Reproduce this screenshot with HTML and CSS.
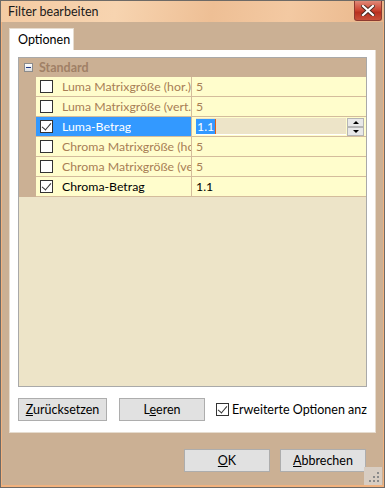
FILE: index.html
```html
<!DOCTYPE html>
<html lang="de">
<head>
    <meta charset="UTF-8">
    <title>Filter bearbeiten</title>
    <link rel="stylesheet" href="styles.css">
</head>
<body>

    <div class="window">
        <div class="titlebar">
            <span class="title">Filter bearbeiten</span>
            <div class="close-btn">
                <svg width="14" height="11" viewBox="0 0 14 11">
                    <path d="M2 1 L12 10 M12 1 L2 10" stroke="#4a2a20" stroke-width="4" stroke-linecap="square"/>
                    <path d="M2 1 L12 10 M12 1 L2 10" stroke="#fff" stroke-width="2.2" stroke-linecap="square"/>
                </svg>
            </div>
        </div>

        <div class="client">
            <div class="tabs">
                <div class="tab">Optionen</div>
            </div>

            <div class="tab-page">
                <div class="prop-grid">
                    <div class="category">
                        <span class="gutter"><span class="toggle"></span></span>
                        <span class="cat-name">Standard</span>
                    </div>

                    <div class="prop-row">
                        <span class="gutter"></span>
                        <span class="prop-name"><span class="check"></span><span class="name-text">Luma Matrixgröße (hor.)</span></span>
                        <span class="prop-value">5</span>
                    </div>
                    <div class="prop-row">
                        <span class="gutter"></span>
                        <span class="prop-name"><span class="check"></span><span class="name-text">Luma Matrixgröße (vert.)</span></span>
                        <span class="prop-value">5</span>
                    </div>
                    <div class="prop-row selected">
                        <span class="gutter"></span>
                        <span class="prop-name"><span class="check checked"></span><span class="name-text">Luma-Betrag</span></span>
                        <span class="prop-value">
                            <span class="editor"><span class="sel-text">1.1</span><span class="caret"></span></span>
                            <span class="spin">
                                <span class="spin-btn"><i class="arrow up"></i></span>
                                <span class="spin-btn"><i class="arrow down"></i></span>
                            </span>
                        </span>
                    </div>
                    <div class="prop-row">
                        <span class="gutter"></span>
                        <span class="prop-name"><span class="check"></span><span class="name-text">Chroma Matrixgröße (hor.)</span></span>
                        <span class="prop-value">5</span>
                    </div>
                    <div class="prop-row">
                        <span class="gutter"></span>
                        <span class="prop-name"><span class="check"></span><span class="name-text">Chroma Matrixgröße (vert.)</span></span>
                        <span class="prop-value">5</span>
                    </div>
                    <div class="prop-row active">
                        <span class="gutter"></span>
                        <span class="prop-name"><span class="check checked"></span><span class="name-text">Chroma-Betrag</span></span>
                        <span class="prop-value">1.1</span>
                    </div>
                </div>

                <div class="actions">
                    <button class="win-button"><u>Z</u>urücksetzen</button>
                    <button class="win-button">L<u>e</u>eren</button>
                    <label class="check-label"><span class="check checked"></span><span class="name-text">Erweiterte Optionen anzeigen</span></label>
                </div>
            </div>

            <div class="footer">
                <button class="win-button"><u>O</u>K</button>
                <button class="win-button"><u>A</u>bbrechen</button>
            </div>

            <div class="size-grip">
                <svg width="12" height="12" viewBox="0 0 12 12" fill="#8a8a8a">
                    <rect x="9" y="1" width="2" height="2"/>
                    <rect x="5" y="5" width="2" height="2"/>
                    <rect x="9" y="5" width="2" height="2"/>
                    <rect x="1" y="9" width="2" height="2"/>
                    <rect x="5" y="9" width="2" height="2"/>
                    <rect x="9" y="9" width="2" height="2"/>
                </svg>
            </div>
        </div>
    </div>

</body>
</html>
```

FILE: styles.css
```css
* {
    box-sizing: border-box;
}

body {
    margin: 0;
    background-color: #cbb094;
    font-family: Lato, "Noto Sans", sans-serif;
    font-size: 12.3px;
    color: #000;
}

.window {
    position: relative;
    width: 385px;
    height: 488px;
    display: flex;
    flex-direction: column;
    background-color: #cbb094;
    border: 1px solid #6e6a66;
    box-shadow: inset 1px 0 0 #f2b27e, inset -1px 0 0 #f2b27e, inset 0 -2px 0 #f2b27e;
    overflow: hidden;
}

.titlebar {
    height: 21px;
    display: flex;
    align-items: center;
    justify-content: space-between;
    padding-left: 7px;
    font-size: 12.5px;
    background: linear-gradient(100deg, #f4cba3 0%, #f7d4b0 30%, #eebf95 55%, #f3c9a2 75%, #e9b68a 100%);
}

.title {
    color: #1a1a1a;
    margin-top: -1px;
}

.close-btn {
    width: 28px;
    height: 20px;
    margin-right: 2px;
    margin-top: -1px;
    display: flex;
    align-items: center;
    justify-content: center;
    border: 1px solid #8e3b30;
    border-top: none;
    border-radius: 0 0 3px 3px;
    background: linear-gradient(#e08a78 0%, #cf4a36 45%, #b8301f 60%, #c9503a 100%);
}

.client {
    flex: 1;
    display: flex;
    flex-direction: column;
    padding: 6px 8px 0 8px;
}

.tabs {
    display: flex;
    height: 22px;
}

.tab {
    width: 65px;
    height: 22px;
    padding: 3px 0 0 8px;
    font-size: 12.5px;
    background-color: #fff;
    border: 1px solid #e6dccf;
    border-bottom: none;
}

.tab-page {
    height: 383px;
    width: 367px;
    background-color: #fff;
    border: 1px solid #e6dccf;
    border-top: none;
    padding: 7px 8px 0 8px;
    display: flex;
    flex-direction: column;
}

.prop-grid {
    height: 330px;
    border: 1px solid #a9a9a9;
    background-color: #ede4c8;
    display: flex;
    flex-direction: column;
}

.category {
    height: 19px;
    display: flex;
    align-items: center;
    background-color: #cbb094;
}

.category .gutter {
    width: 19px;
    padding-left: 5px;
}

.toggle {
    position: relative;
    display: block;
    width: 9px;
    height: 9px;
    border: 1px solid #8c8c8c;
    background: linear-gradient(#fff, #dcdcdc);
}

.toggle::after {
    content: "";
    position: absolute;
    left: 1px;
    top: 3px;
    width: 5px;
    height: 1px;
    background-color: #1f3a8a;
}

.cat-name {
    font-weight: bold;
    font-size: 12.5px;
    color: #a08066;
    padding-left: 1px;
}

.prop-row {
    height: 20px;
    display: flex;
    border-bottom: 1px solid #d4bc9c;
}

.prop-row .gutter {
    width: 17px;
    background-color: #cbb094;
    margin-bottom: -1px;
}

.prop-name {
    width: 156px;
    display: flex;
    align-items: center;
    padding-left: 4px;
    background-color: #fffdcc;
    color: #a87e55;
    border-right: 1px solid #d4bc9c;
}

.name-text {
    white-space: nowrap;
    overflow: hidden;
    min-width: 0;
}

.prop-name .check {
    margin-right: 9px;
}

.prop-value {
    flex: 1;
    display: flex;
    align-items: center;
    padding-left: 4px;
    background-color: #fffdcc;
    color: #a87e55;
}

.selected .prop-name {
    background-color: #3399ff;
    color: #fff;
}

.active .prop-name,
.active .prop-value {
    color: #000;
}

.selected .prop-value {
    padding: 1px 0 0 4px;
    align-items: flex-start;
}

.editor {
    width: 150px;
    height: 17px;
    display: flex;
    align-items: center;
    background-color: #ede4c8;
    border-bottom: 1px solid #fff;
}

.sel-text {
    background-color: #3399ff;
    color: #fff;
    padding: 0 1px;
    line-height: 15px;
}

.caret {
    width: 1px;
    height: 15px;
    background-color: #e0601a;
}

.spin {
    display: flex;
    flex-direction: column;
    margin-left: 1px;
}

.spin-btn {
    width: 17px;
    height: 9px;
    display: flex;
    align-items: center;
    justify-content: center;
    background-color: #e8e8e8;
    border: 1px solid #b5b5b5;
}

.arrow {
    width: 0;
    height: 0;
    border-left: 3px solid transparent;
    border-right: 3px solid transparent;
}

.arrow.up {
    border-bottom: 3px solid #000;
}

.arrow.down {
    border-top: 3px solid #000;
}

.check {
    flex: none;
    position: relative;
    display: inline-block;
    width: 13px;
    height: 13px;
    border: 1px solid #333;
    background-color: #fff;
}

.check.checked::after {
    content: "";
    position: absolute;
    left: 3px;
    top: 0;
    width: 4px;
    height: 8px;
    border-right: 1px solid #333;
    border-bottom: 1px solid #333;
    transform: rotate(40deg);
}

.actions {
    display: flex;
    align-items: center;
    height: 23px;
    margin-top: 11px;
}

.win-button {
    height: 23px;
    width: 89px;
    padding: 0;
    font-family: Lato, "Noto Sans", sans-serif;
    font-size: 12.5px;
    color: #000;
    background-color: #e1e1e1;
    border: 1px solid #adadad;
}

.actions .win-button + .win-button {
    margin-left: 12px;
    width: 86px;
}

.check-label {
    display: flex;
    align-items: center;
    margin-left: 11px;
    font-size: 12.5px;
    flex: 1;
    min-width: 0;
}

.check-label .check {
    margin-right: 3px;
}

.footer {
    display: flex;
    justify-content: flex-end;
    gap: 10px;
    margin-top: 16px;
    padding-right: 10px;
}

.footer .win-button {
    width: 86px;
}

.size-grip {
    position: absolute;
    right: 2px;
    bottom: 2px;
    width: 18px;
    height: 18px;
    display: flex;
    align-items: flex-end;
    justify-content: flex-end;
    padding: 0 2px 2px 0;
    background-color: #d8cdc2;
}
```
